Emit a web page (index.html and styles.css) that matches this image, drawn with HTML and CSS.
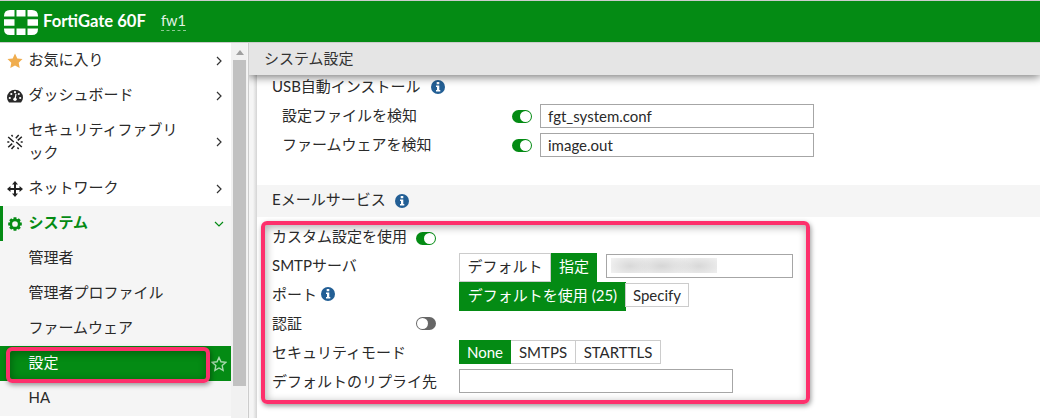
FILE: index.html
```html
<!DOCTYPE html>
<html lang="ja">
<head>
<meta charset="utf-8">
<title>FortiGate 60F</title>
<link rel="stylesheet" href="styles.css">
</head>
<body>
<svg class="defs" width="0" height="0">
  <symbol id="chev" viewBox="0 0 10 10"><path d="M3 1l4 4-4 4" fill="none" stroke="#333" stroke-width="1.2"/></symbol>
  <symbol id="info" viewBox="0 0 14 14"><circle cx="7" cy="7" r="7" fill="#235f95"/><path d="M5.700 2h2.600v2.200H5.700zM5 5.500h3.300v4.400h1V11.500H5V9.900h1V7H5z" fill="#fff"/></symbol>
</svg>
<header class="top">
  <svg class="logo" width="34" height="25" viewBox="0 0 34 25" fill="#fff">
    <path d="M6 0h4.500v6.500H0V6Q0 0 6 0zM12.500 0h9v6.500h-9zM23.500 0H28q6 0 6 6v.5H23.500zM0 9.300h10.500v6.500H0zM23.500 9.300H34v6.500H23.500zM0 18.500h10.500V25H6q-6 0-6-6zM12.500 18.500h9V25h-9zM23.500 18.500H34v.5q0 6-6 6h-4.500z"/>
  </svg>
  <span class="product">FortiGate 60F</span>
  <span class="host">fw1</span>
</header>
<div class="body">
  <nav class="side">
    <div class="item"><svg class="ico up" viewBox="0 0 16 16"><path d="M8 .5l2.300 4.900 5.200.7-3.800 3.600 1 5.300L8 12.400 3.300 15l1-5.300L.5 6.100l5.200-.7z" fill="#f0ad4e"/></svg><span class="name">お気に入り</span><svg class="arrow"><use href="#chev"/></svg></div>
    <div class="item"><svg class="ico up" viewBox="0 0 16 16"><path d="M2 14.500Q0 12 0 9.700a8 8 0 0 1 16 0q0 2.300-2 4.800z" fill="#2a2a2a"/><g fill="#fff"><circle cx="2.800" cy="10" r="1.100"/><circle cx="4.300" cy="6" r="1.100"/><circle cx="8" cy="4.200" r="1.100"/><circle cx="11.800" cy="6" r="1.100"/><circle cx="13.200" cy="10" r="1.100"/></g><path d="M9 5.800L8.300 10" stroke="#fff" stroke-width="1.200"/><circle cx="8" cy="11.300" r="1.700" fill="#fff"/></svg><span class="name">ダッシュボード</span><svg class="arrow"><use href="#chev"/></svg></div>
    <div class="item"><svg class="ico up" viewBox="0 0 16 16" fill="none" stroke="#222" stroke-width="1.500"><path d="M4.500 1l1.200 1.400M11.700 1L8.800 4.200M1.200 3l5.600 5M14.800 2.800l-4 3.600M.3 8h2M13.700 8h2M9.200 8l5.600 5M5.200 9.600l-4 3.600M7.400 11.700L4.500 15M10.400 13.600L11.700 15"/></svg><span class="name">セキュリティファブリック</span><svg class="arrow"><use href="#chev"/></svg></div>
    <div class="item"><svg class="ico up" viewBox="0 0 16 16"><path d="M8 2v12M2 8h12" stroke="#222" stroke-width="2"/><path d="M8 0l3 3.500H5zM8 16l3-3.500H5zM0 8l3.500-3v6zM16 8l-3.500-3v6z" fill="#222"/></svg><span class="name">ネットワーク</span><svg class="arrow"><use href="#chev"/></svg></div>
    <div class="item open"><svg class="ico up" viewBox="0 0 16 16" fill="none" stroke="#048b14"><path d="M8 1.200v2.500M8 12.300v2.500M1.200 8h2.500M12.300 8h2.500M3.200 3.200L5 5M11 11l1.800 1.800M3.200 12.800L5 11M11 5l1.800-1.800" stroke-width="2.900"/><circle cx="8" cy="8" r="4.200" stroke-width="2.700"/></svg><span class="name">システム</span><svg class="arrow" viewBox="0 0 10 10"><path d="M1 3l4 4 4-4" fill="none" stroke="#048b14" stroke-width="1.200"/></svg></div>
    <div class="item sub">管理者</div>
    <div class="item sub">管理者プロファイル</div>
    <div class="item sub">ファームウェア</div>
    <div class="item sub current"><span class="name">設定</span><svg class="fav" viewBox="0 0 16 16"><path d="M8 1.500l2 4.300 4.700.6-3.500 3.200.9 4.700L8 12l-4.100 2.300.9-4.700L1.300 6.400 6 5.800z" fill="none" stroke="#a9d9ae" stroke-width="1.400"/></svg></div>
    <div class="item sub">HA</div>
    <div class="mark mark-nav"></div>
  </nav>
  <div class="scroll"><svg width="8" height="5" viewBox="0 0 8 5"><path d="M0 5l4-5 4 5z" fill="#a0a0a0"/></svg><div class="thumb"></div></div>
  <main class="main">
    <h1 class="title">システム設定</h1>
    <div class="panel">
      <div class="row"><span>USB自動インストール</span><svg class="info wide"><use href="#info"/></svg></div>
      <div class="row"><span class="label indent">設定ファイルを検知</span><i class="toggle on"></i><div class="input file">fgt_system.conf</div></div>
      <div class="row"><span class="label indent">ファームウェアを検知</span><i class="toggle on"></i><div class="input file">image.out</div></div>
      <h2 class="section"><span>Eメールサービス</span><svg class="info mid"><use href="#info"/></svg></h2>
      <div class="row"><span class="label">カスタム設定を使用</span><i class="toggle on low"></i></div>
      <div class="row"><span class="label field">SMTPサーバ</span><div class="btn tall w-default">デフォルト</div><div class="btn tall active w-custom">指定</div><div class="input server"><span class="masked"></span></div></div>
      <div class="row"><span class="label field">ポート<svg class="info near"><use href="#info"/></svg></span><div class="btn tall active w-port">デフォルトを使用 (25)</div><div class="btn shifted w-specify">Specify</div></div>
      <div class="row"><span class="label">認証</span><i class="toggle off"></i></div>
      <div class="row"><span class="label field">セキュリティモード</span><div class="btn active w-none">None</div><div class="btn w-smtps">SMTPS</div><div class="btn w-starttls">STARTTLS</div></div>
      <div class="row"><span class="label field">デフォルトのリプライ先</span><div class="input reply"></div></div>
      <div class="mark mark-mail"></div>
    </div>
  </main>
</div>
</body>
</html>
```
FILE: styles.css
```css
* { box-sizing: border-box; }
body {
  margin: 0; width: 1040px; height: 418px; overflow: hidden;
  background: #fff; color: #2a2a2a;
  font: 15px/23px Lato, "Noto Sans CJK JP", sans-serif;
  font-weight: 400;
}
svg { display: block; flex: none; }
.defs { position: absolute; }
.top {
  display: flex; height: 42px; padding: 8px 4px 0;
  background: #048b14; color: #fff; border-top: 1px solid #ccc;
}
.logo { margin-top: 1px; }
.product { width: 118px; margin-left: 5px; font-weight: 700; font-size: 16.6px; line-height: 25px; white-space: nowrap; }
.host { height: 22px; line-height: 24px; border-bottom: 1px dashed #8fca95; color: #e3f3e5; font-size: 14.6px; }
.body { display: flex; height: 376px; }
.side { position: relative; width: 231px; border-top: 1px solid #ccc; flex: none; }
.item { display: flex; align-items: center; min-height: 35px; padding: 5px 7px 7px; }
.ico { width: 16px; height: 16px; margin-right: 5.5px; position: relative; top: 2px; }
.ico.up { top: 1px; }
.item .name { width: 156px; line-break: anywhere; }
.arrow { width: 10px; height: 10px; margin-left: 29px; position: relative; top: 1px; }
.open { background: #f5f5f5; border-left: 3px solid #048b14; padding-left: 4px; color: #048b14; font-weight: 700; }
.sub { background: #f5f5f5; padding-left: 28.5px; }
.current { background: #048b14; color: #fff; }
.item.current .name { width: 182px; flex: none; }
.fav { width: 16px; height: 16px; position: relative; top: 1px; }
.scroll { display: flex; flex-direction: column; align-items: center; flex: none; width: 18px; border-top: 1px solid #ccc; background: linear-gradient(to right, #f1f1f1 16px, #f5f5f5 16px, #f5f5f5 17px, #ccc 17px); padding: 7px 1px 0 0; }
.thumb { width: 13px; height: 326px; margin-top: 5px; background: #c1c1c1; }
.main { flex: 1; background: linear-gradient(to right, #f5f5f5 4px, #d4d4d4 8px, #fff 8px); }
.title {
  position: relative; z-index: 2; margin: 0; height: 33px; padding: 4px 15px;
  border-top: 1px solid #ccc; background: #e5e5e5; box-shadow: 0 2px 9px #0008;
  clip-path: inset(0 0 -16px 0);
  font-size: 15px; line-height: 23px; font-weight: 400; color: #333;
}
.panel { margin: -1px 0 0 8px; }
.row { display: flex; height: 29px; padding-left: 15px; }
.row > span { line-height: 25px; white-space: nowrap; }
.label { width: 144px; flex: none; display: flex; }
.label.field { width: 187px; }
.label.indent { width: 240px; padding-left: 10px; }
.info { width: 14px; height: 14px; }
.info.wide { margin: 6px 0 0 10px; }
.info.mid { margin-left: 9px; }
.info.near { margin: 5px 0 0 4px; }
.toggle { width: 20px; height: 13px; border-radius: 7px; flex: none; margin-top: 7px; padding: 1px; display: flex; }
.toggle::after { content: ""; width: 11px; height: 11px; border-radius: 50%; background: #fff; }
.on { background: #048b14; justify-content: flex-end; }
.off { background: #666; margin-top: 6px; }
.low { margin-top: 8px; }
.input { height: 24px; margin-top: 1px; border: 1px solid #a6a6a6; background: #fff; padding: 0 7px; line-height: 23px; }
.file { width: 274px; margin-left: 8px; }
.server { width: 187px; margin-left: 9px; padding: 3px 4px; }
.masked { display: block; width: 106px; height: 15px; background: radial-gradient(ellipse 22px 12px at 19px 8px, #d8d8d8, transparent), radial-gradient(ellipse 30px 12px at 51px 8px, #d6d6d6, transparent), radial-gradient(ellipse 26px 12px at 88px 8px, #d8d8d8, transparent), #f1f1f1; }
.reply { width: 274px; margin-top: 0; }
.section { display: flex; align-items: center; height: 32px; margin: 24px 0 7px; padding-left: 15px; background: #f5f5f5; font-size: 15px; font-weight: 400; }
.section span { position: relative; top: -2px; }
.btn { height: 24px; flex: none; border: 1px solid #ccc; background: #fff; text-align: center; line-height: 23px; white-space: nowrap; }
.tall { height: 29px; line-height: 25px; }
.active { background: #048b14; border-color: #048b14; color: #fff; }
.w-default { width: 92px; }
.w-custom { width: 46px; }
.w-port { width: 167px; }
.w-specify { width: 64px; margin-left: -1px; }
.shifted { margin-top: 1px; }
.w-none { width: 52px; }
.w-smtps { width: 65px; border-left: 0; }
.w-starttls { width: 85px; border-left: 0; }
.mark { position: absolute; z-index: 3; border: 4px solid #fd306c; border-radius: 6px; box-shadow: 1px 2px 5px #0006, inset 1px 2px 8px #0005; pointer-events: none; }
.mark-nav { left: 6px; top: 304px; width: 204px; height: 36px; }
.mark-mail { left: 261px; top: 221px; width: 549px; height: 183px; }
```
